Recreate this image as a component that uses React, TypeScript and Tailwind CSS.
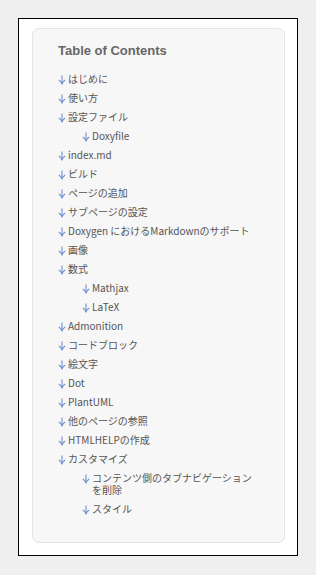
import React from "react";

interface TocItem {
  title: string;
  children?: TocItem[];
}

const toc: TocItem[] = [
  { title: "はじめに" },
  { title: "使い方" },
  { title: "設定ファイル", children: [{ title: "Doxyfile" }] },
  { title: "index.md" },
  { title: "ビルド" },
  { title: "ページの追加" },
  { title: "サブページの設定" },
  { title: "Doxygen におけるMarkdownのサポート" },
  { title: "画像" },
  { title: "数式", children: [{ title: "Mathjax" }, { title: "LaTeX" }] },
  { title: "Admonition" },
  { title: "コードブロック" },
  { title: "絵文字" },
  { title: "Dot" },
  { title: "PlantUML" },
  { title: "他のページの参照" },
  { title: "HTMLHELPの作成" },
  {
    title: "カスタマイズ",
    children: [{ title: "コンテンツ側のタブナビゲーションを削除" }, { title: "スタイル" }],
  },
];

function DownArrow() {
  return (
    <svg width="10" height="12" viewBox="0 0 10 12" className="shrink-0">
      <path d="M4 2.5 V10.5" stroke="#6f8fcf" strokeWidth="1.1" fill="none" />
      <path d="M0.8 7 Q3 8.2 4 10.8 Q5 8.2 7.2 7" stroke="#6f8fcf" strokeWidth="1.1" fill="none" />
    </svg>
  );
}

function TocList({ items, nested }: { items: TocItem[]; nested?: boolean }) {
  return (
    <ul className={`flex flex-col gap-[7px] ${nested ? "pl-[24px] pt-[7px]" : ""}`}>
      {items.map((item) => (
        <li key={item.title}>
          <a className="flex items-start text-[#555555] leading-[12px]">
            <DownArrow />
            <span>{item.title}</span>
          </a>
          {item.children && <TocList items={item.children} nested />}
        </li>
      ))}
    </ul>
  );
}

export default function App() {
  return (
    <div className="min-h-[575px] bg-[#efefef] p-[18px]">
      <div className="w-[280px] border border-black bg-white pl-[13px] pr-[12px] pt-[9px] pb-[12px]">
        <div
          className="rounded-[7px] border border-[#e4e4e4] bg-[#f7f7f7] px-[25px] pt-[14px] pb-[27px] text-[10px]"
          style={{ fontFamily: '"Noto Sans CJK JP", "Noto Sans", sans-serif' }}
        >
          <h2
            className="text-[13px] font-bold leading-[15px] text-[#666666] mb-[15px]"
            style={{ fontFamily: '"Liberation Sans", Arial, sans-serif' }}
          >
            Table of Contents
          </h2>
          <TocList items={toc} />
        </div>
      </div>
    </div>
  );
}
